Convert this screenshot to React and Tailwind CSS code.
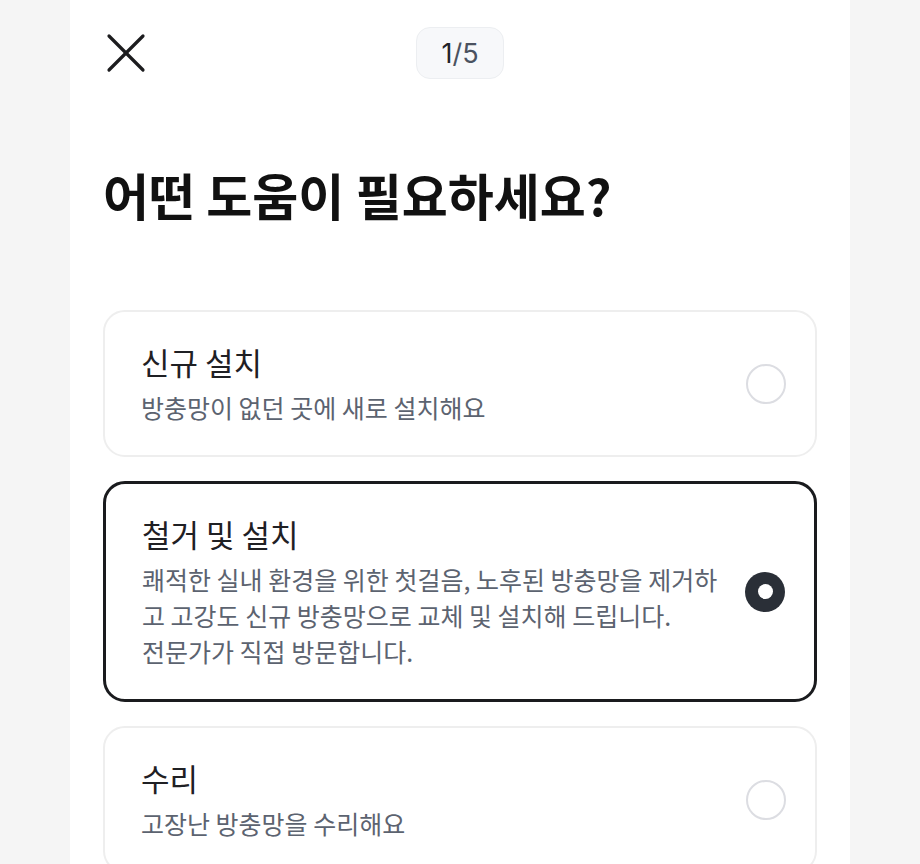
import React, { useState } from 'react'

const options = [
  {
    id: 'new',
    title: '신규 설치',
    desc: '방충망이 없던 곳에 새로 설치해요',
  },
  {
    id: 'replace',
    title: '철거 및 설치',
    desc: '쾌적한 실내 환경을 위한 첫걸음, 노후된 방충망을 제거하고 고강도 신규 방충망으로 교체 및 설치해 드립니다.\n전문가가 직접 방문합니다.',
  },
  {
    id: 'repair',
    title: '수리',
    desc: '고장난 방충망을 수리해요',
  },
]

const CloseIcon = () => (
  <svg width="40" height="40" viewBox="0 0 40 40" fill="none" stroke="#1c1c1e" strokeWidth="3.2" strokeLinecap="round">
    <path d="M3 3 L37 37" />
    <path d="M37 3 L3 37" />
  </svg>
)

const App = () => {
  const [selected, setSelected] = useState('replace')

  return (
    <div className="min-h-screen bg-[#f5f5f5] font-['Noto_Sans_CJK_KR','Noto_Sans',sans-serif]">
      <div className="mx-auto min-h-screen w-[780px] bg-white px-[33px] pb-10">
        {/* HEADER */}
        <div className="grid grid-cols-3 items-center pt-[27px]">
          <button className="justify-self-start pl-[3px]">
            <CloseIcon />
          </button>
          <div className="flex h-[52px] w-[88px] items-center justify-center justify-self-center rounded-[14px] border-[1.5px] border-[#eceef1] bg-[#f7f8fa] font-['Inter',sans-serif] text-[27px] leading-none">
            <span className="text-[#1f2328]">1</span>
            <span className="text-[#4b5260]">/5</span>
          </div>
          <div />
        </div>

        <h1 className="mt-[86px] text-[50px] font-bold leading-[58px] text-[#111111]">
          어떤 도움이 필요하세요?
        </h1>

        {/* OPTIONS */}
        <div className="mt-[87px] flex flex-col gap-[24px]">
          {options.map((opt) => {
            const active = selected === opt.id
            return (
              <button
                key={opt.id}
                onClick={() => setSelected(opt.id)}
                className={`flex items-center gap-6 rounded-[22px] bg-white pl-[36px] pr-[29px] py-[30px] text-left ${
                  active ? 'border-[3px] border-[#1a1b1e]' : 'border-2 border-[#eeeeee]'
                }`}
              >
                <div className="flex-1">
                  <div className="text-[31px] leading-[40px] text-[#1f2024]">{opt.title}</div>
                  <p className="mt-[7px] whitespace-pre-line text-[25px] leading-[36px] text-[#5c6370]">{opt.desc}</p>
                </div>
                {active ? (
                  <span className="flex h-10 w-10 shrink-0 items-center justify-center rounded-full bg-[#2a2f37]">
                    <span className="h-[15px] w-[15px] rounded-full bg-white" />
                  </span>
                ) : (
                  <span className="h-10 w-10 shrink-0 rounded-full border-2 border-[#dcdde2] bg-white" />
                )}
              </button>
            )
          })}
        </div>
      </div>
    </div>
  )
}

export default App
